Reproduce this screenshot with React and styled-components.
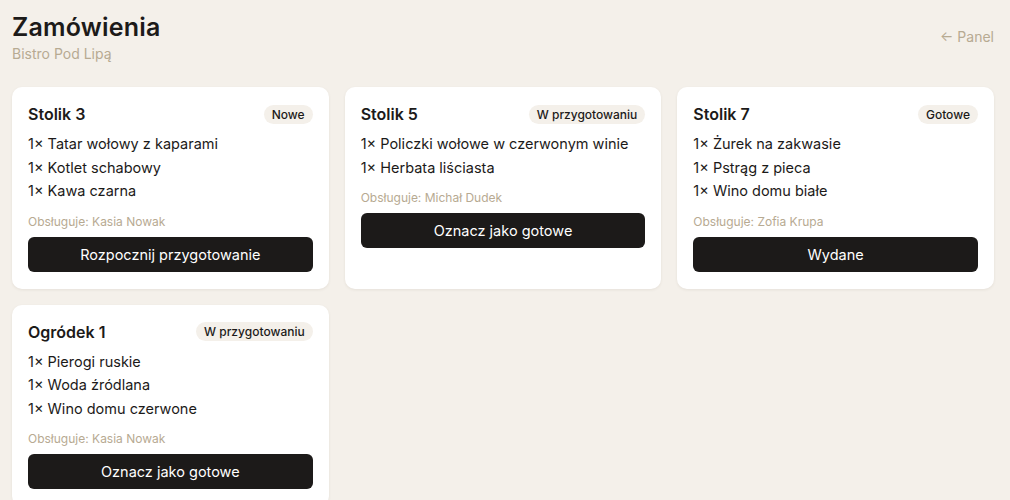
import styled, { createGlobalStyle } from 'styled-components'

const GlobalStyle = createGlobalStyle`
  html, body {
    margin: 0;
    padding: 0;
    background: #f4f0ea;
  }
  body {
    font-family: Inter, "Noto Sans", sans-serif;
    color: #1c1a19;
  }
  * { box-sizing: border-box; }
`

const orders = [
  {
    table: 'Stolik 3',
    status: 'Nowe',
    items: ['Tatar wołowy z kaparami', 'Kotlet schabowy', 'Kawa czarna'],
    waiter: 'Kasia Nowak',
    action: 'Rozpocznij przygotowanie',
  },
  {
    table: 'Stolik 5',
    status: 'W przygotowaniu',
    items: ['Policzki wołowe w czerwonym winie', 'Herbata liściasta'],
    waiter: 'Michał Dudek',
    action: 'Oznacz jako gotowe',
  },
  {
    table: 'Stolik 7',
    status: 'Gotowe',
    items: ['Żurek na zakwasie', 'Pstrąg z pieca', 'Wino domu białe'],
    waiter: 'Zofia Krupa',
    action: 'Wydane',
  },
  {
    table: 'Ogródek 1',
    status: 'W przygotowaniu',
    items: ['Pierogi ruskie', 'Woda źródlana', 'Wino domu czerwone'],
    waiter: 'Kasia Nowak',
    action: 'Oznacz jako gotowe',
  },
]

const Page = styled.div`
  padding: 12px 16px 16px 12px;
`

const Header = styled.header`
  display: flex;
  justify-content: space-between;
  align-items: flex-start;
  margin-bottom: 23px;
`

const Title = styled.h1`
  margin: 0;
  font-size: 25px;
  font-weight: 600;
  line-height: 30px;
  letter-spacing: 0.2px;
`

const Subtitle = styled.div`
  font-size: 14px;
  color: #b7aa92;
  margin-top: 2px;
  line-height: 20px;
`

const BackLink = styled.a`
  font-size: 14px;
  color: #b7aa92;
  text-decoration: none;
  margin-top: 16px;
`

const Grid = styled.div`
  display: grid;
  grid-template-columns: repeat(3, 1fr);
  gap: 16px;
`

const Card = styled.div`
  background: #fff;
  border-radius: 10px;
  box-shadow: 0 1px 3px rgba(60, 45, 20, 0.08);
  padding: 16px 16px 17px;
  display: flex;
  flex-direction: column;
`

const CardHead = styled.div`
  display: flex;
  justify-content: space-between;
  align-items: center;
  margin-bottom: 7px;
`

const TableName = styled.div`
  font-size: 16px;
  font-weight: 600;
  line-height: 22px;
`

const Badge = styled.span`
  background: #f4f0ea;
  border-radius: 10px;
  padding: 2px 8px;
  font-size: 12px;
  font-weight: 500;
  line-height: 15px;
`

const Items = styled.ul`
  list-style: none;
  margin: 0 0 11px;
  padding: 0;
`

const Item = styled.li`
  font-size: 14.5px;
  line-height: 23.5px;
`

const Waiter = styled.div`
  font-size: 12px;
  color: #b7aa92;
  line-height: 16px;
  margin-bottom: 7px;
`

const ActionButton = styled.button`
  height: 35px;
  border: none;
  border-radius: 6px;
  background: #1c1a19;
  color: #fff;
  font-family: inherit;
  font-size: 14.5px;
  font-weight: 400;
  cursor: pointer;
`

export default function App() {
  return (
    <>
      <GlobalStyle />
      <Page>
        <Header>
          <div>
            <Title>Zamówienia</Title>
            <Subtitle>Bistro Pod Lipą</Subtitle>
          </div>
          <BackLink href="#">← Panel</BackLink>
        </Header>
        <Grid>
          {orders.map((o) => (
            <Card key={o.table}>
              <CardHead>
                <TableName>{o.table}</TableName>
                <Badge>{o.status}</Badge>
              </CardHead>
              <Items>
                {o.items.map((it) => (
                  <Item key={it}>1× {it}</Item>
                ))}
              </Items>
              <Waiter>Obsługuje: {o.waiter}</Waiter>
              <ActionButton>{o.action}</ActionButton>
            </Card>
          ))}
        </Grid>
      </Page>
    </>
  )
}
